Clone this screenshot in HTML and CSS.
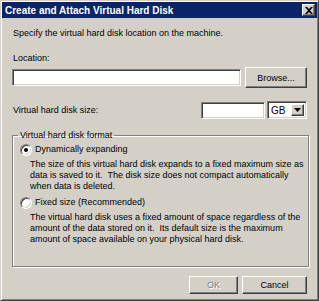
FILE: index.html
```html
<!DOCTYPE html>
<html lang="en">
<head>
    <meta charset="UTF-8">
    <meta name="viewport" content="width=device-width, initial-scale=1.0">
    <title>Create and Attach Virtual Hard Disk</title>
    <link rel="stylesheet" href="styles.css">
</head>
<body>
    <div class="window">
        <div class="titlebar">
            <span class="title">Create and Attach Virtual Hard Disk</span>
            <span class="close-btn">
                <svg width="8" height="7" viewBox="0 0 8 7">
                    <path d="M0 0h2l2 2 2-2h2L5 3.5 8 7H6L4 5 2 7H0l3-3.5z" fill="#000"/>
                </svg>
            </span>
        </div>

        <div class="content">
            <p class="intro">Specify the virtual hard disk location on the machine.</p>

            <label class="field-label">Location:</label>
            <div class="row location-row">
                <div class="textbox location-box"></div>
                <button class="btn browse-btn">Browse...</button>
            </div>

            <div class="row size-row">
                <span class="size-label">Virtual hard disk size:</span>
                <div class="textbox size-box"></div>
                <div class="select">
                    <span class="select-value">GB</span>
                    <span class="select-arrow">
                        <svg width="7" height="4" viewBox="0 0 7 4"><path d="M0 0h7L3.5 4z" fill="#000"/></svg>
                    </span>
                </div>
            </div>

            <fieldset class="format-group">
                <legend>Virtual hard disk format</legend>

                <div class="option">
                    <span class="radio checked"></span>
                    <span class="option-text">Dynamically expanding</span>
                </div>
                <p class="option-desc">The size of this virtual hard disk expands to a fixed maximum size as<br>data is saved to it.&nbsp; The disk size does not compact automatically<br>when data is deleted.</p>

                <div class="option">
                    <span class="radio"></span>
                    <span class="option-text">Fixed size (Recommended)</span>
                </div>
                <p class="option-desc">The virtual hard disk uses a fixed amount of space regardless of the<br>amount of the data stored on it.&nbsp; Its default size is the maximum<br>amount of space available on your physical hard disk.</p>
            </fieldset>

            <div class="buttons">
                <button class="btn ok-btn" disabled>OK</button>
                <button class="btn cancel-btn">Cancel</button>
            </div>
        </div>
    </div>
</body>
</html>
```

FILE: styles.css
```css
* {
    margin: 0;
    padding: 0;
    box-sizing: border-box;
}

body {
    font-family: 'Liberation Sans', Arial, sans-serif;
    font-size: 9px;
    line-height: 11px;
    color: #000;
    background: #d4d0c8;
}

.window {
    width: 319px;
    height: 301px;
    background: #d4d0c8;
    border: 1px solid;
    border-color: #d4d0c8 #404040 #404040 #d4d0c8;
    box-shadow: inset 1px 1px 0 #fff, inset -1px -1px 0 #808080;
    padding: 1px;
    display: flex;
    flex-direction: column;
}

.titlebar {
    height: 16px;
    background: #0a246a;
    display: flex;
    align-items: center;
    justify-content: space-between;
    padding: 0 2px 0 3px;
}

.title {
    color: #fff;
    font-weight: bold;
    font-size: 10px;
}

.close-btn {
    width: 13px;
    height: 12px;
    background: #d4d0c8;
    border: 1px solid;
    border-color: #fff #404040 #404040 #fff;
    box-shadow: inset -1px -1px 0 #808080;
    display: flex;
    align-items: center;
    justify-content: center;
}

.content {
    flex: 1;
    padding: 10px 10px 0 10px;
    display: flex;
    flex-direction: column;
}

.intro {
    margin-left: 1px;
}

.field-label {
    margin-top: 14px;
    margin-left: 1px;
}

.row {
    display: flex;
    align-items: center;
}

.location-row {
    margin-top: 3px;
    height: 21px;
}

.textbox {
    background: #fff;
    border: 1px solid;
    border-color: #808080 #fff #fff #808080;
    box-shadow: inset 1px 1px 0 #404040, inset -1px -1px 0 #d4d0c8;
}

.location-box {
    width: 229px;
    height: 17px;
}

.btn {
    font-family: inherit;
    font-size: 9px;
    color: #000;
    background: #d4d0c8;
    border: 1px solid;
    border-color: #fff #404040 #404040 #fff;
    box-shadow: inset -1px -1px 0 #808080;
}

.browse-btn {
    width: 62px;
    height: 21px;
    margin-left: auto;
}

.size-row {
    margin-top: 13px;
    height: 18px;
}

.size-label {
    margin-left: 1px;
}

.size-box {
    width: 64px;
    height: 17px;
    margin-left: auto;
}

.select {
    width: 40px;
    height: 18px;
    margin-left: 2px;
    background: #fff;
    border: 1px solid;
    border-color: #808080 #fff #fff #808080;
    box-shadow: inset 1px 1px 0 #404040, inset -1px -1px 0 #d4d0c8;
    display: flex;
    align-items: center;
    padding: 2px;
}

.select-value {
    flex: 1;
    padding-left: 1px;
    font-size: 10px;
}

.select-arrow {
    width: 13px;
    height: 12px;
    background: #d4d0c8;
    border: 1px solid;
    border-color: #fff #404040 #404040 #fff;
    box-shadow: inset -1px -1px 0 #808080;
    display: flex;
    align-items: center;
    justify-content: center;
}

.format-group {
    margin-top: 11px;
    border: 1px solid #808080;
    box-shadow: 1px 1px 0 #fff, inset 1px 1px 0 #fff;
    padding: 2px 4px 17px 7px;
    width: 296px;
}

.format-group legend {
    padding: 0 2px;
    margin-left: -2px;
}

.option {
    display: flex;
    align-items: center;
    height: 13px;
}

.radio {
    width: 12px;
    height: 12px;
    border-radius: 50%;
    background: #fff;
    border: 1px solid;
    border-color: #808080 #fff #fff #808080;
    box-shadow: inset 1px 1px 0 #404040, inset -1px -1px 0 #d4d0c8;
    display: flex;
    align-items: center;
    justify-content: center;
}

.radio.checked::after {
    content: '';
    width: 4px;
    height: 4px;
    border-radius: 50%;
    background: #000;
}

.option-text {
    margin-left: 3px;
}

.option-desc {
    margin: 3px 0 4px 10px;
    white-space: nowrap;
}

.buttons {
    display: flex;
    justify-content: flex-end;
    gap: 4px;
    margin-top: 9px;
}

.ok-btn,
.cancel-btn {
    width: 49px;
    height: 18px;
}

.cancel-btn {
    width: 65px;
}

.ok-btn:disabled {
    color: #808080;
    text-shadow: 1px 1px 0 #fff;
}
```
